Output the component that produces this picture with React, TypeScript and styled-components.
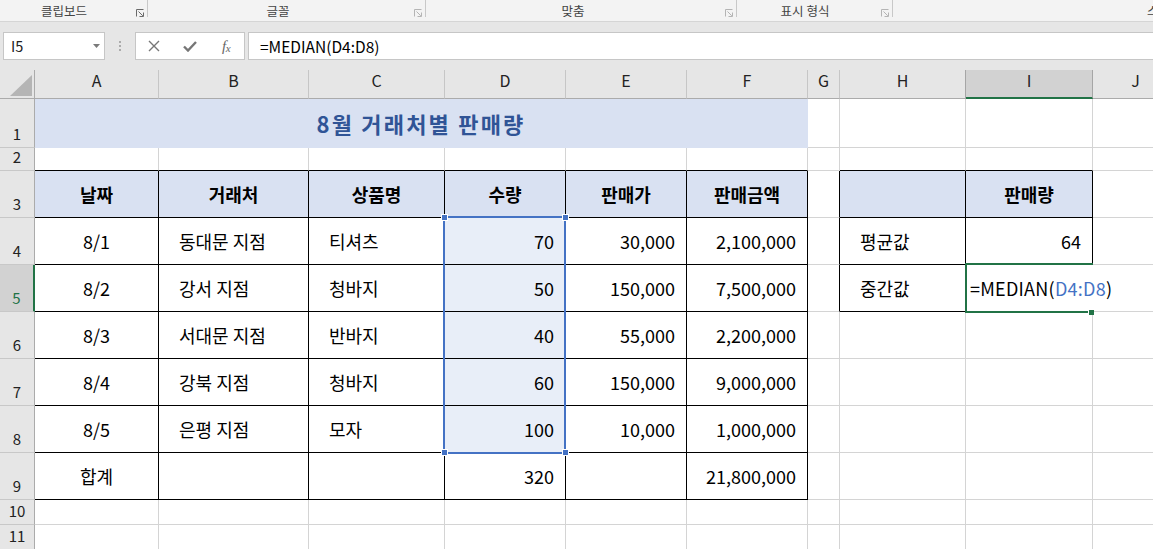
import React from "react";
import styled, { createGlobalStyle, css } from "styled-components";

const FONT = `"Noto Sans CJK KR", "Noto Sans", sans-serif`;
const GREEN = "#217346";
const BLUE = "#4472c4";
const HEAD_FILL = "#d9e1f2";
const SEL_FILL = "#e8eef8";
const GRID = "#d4d4d4";

const GlobalStyle = createGlobalStyle`
  html, body { margin: 0; padding: 0; background: #fff; }
  body { font-family: ${FONT}; overflow: hidden; }
`;

const Window = styled.div`
  width: 1153px;
  height: 549px;
  overflow: hidden;
  display: flex;
  flex-direction: column;
  background: #fff;
  font-family: ${FONT};
`;

/* ---------- Ribbon ---------- */
const Ribbon = styled.div`
  flex: none;
  display: flex;
  align-items: flex-start;
  height: 21px;
  background: #f3f3f3;
  border-bottom: 1px solid #d5d5d5;
  overflow: hidden;
`;

const Group = styled.div<{ $w?: number }>`
  flex: ${(p) => (p.$w ? "none" : "1")};
  width: ${(p) => (p.$w ? `${p.$w}px` : "auto")};
  height: 21px;
  display: flex;
  align-items: flex-start;
  min-width: 0;
`;

const GroupLabel = styled.div<{ $pr?: number; $pl?: number; $left?: boolean }>`
  flex: 1;
  text-align: ${(p) => (p.$left ? "left" : "center")};
  padding-right: ${(p) => p.$pr ?? 0}px;
  padding-left: ${(p) => p.$pl ?? 0}px;
  font-size: 12.5px;
  line-height: 21px;
  color: #444;
  white-space: nowrap;
  overflow: hidden;
`;

const Launcher = styled.svg<{ $dim?: boolean }>`
  flex: none;
  width: 8px;
  height: 8px;
  margin: 9px 3px 0 0;
  color: ${(p) => (p.$dim ? "#b4b4b4" : "#6a6a6a")};
`;

const Divider = styled.div`
  flex: none;
  width: 1px;
  height: 17px;
  background: #c8c8c8;
`;

const LauncherIcon = ({ dim }: { dim?: boolean }) => (
  <Launcher $dim={dim} viewBox="0 0 8 8" fill="none" stroke="currentColor" strokeWidth="1">
    <path d="M0.5 7.5 V0.5 H7.5" />
    <path d="M2.5 2.5 L6.8 6.8" />
    <path d="M7.5 3.5 V7.5 H3.5" />
  </Launcher>
);

/* ---------- Formula bar ---------- */
const FormulaArea = styled.div`
  flex: none;
  display: flex;
  align-items: flex-start;
  height: 48px;
  box-sizing: border-box;
  padding: 10px 0 0 3px;
  background: #e6e6e6;
`;

const NameBox = styled.div`
  flex: none;
  width: 102px;
  height: 28px;
  box-sizing: border-box;
  background: #fff;
  border: 1px solid #c6c6c6;
  display: flex;
  align-items: center;
  justify-content: space-between;
  padding: 0 4px 1px 7px;
  font-size: 14.5px;
  color: #222;
`;

const Caret = styled.svg`
  width: 7px;
  height: 4px;
  fill: #7a7a7a;
`;

const DotsSlot = styled.div`
  flex: none;
  width: 30px;
  height: 28px;
  display: flex;
  flex-direction: column;
  align-items: center;
  justify-content: center;
  gap: 2px;
`;

const Dot = styled.span`
  width: 2px;
  height: 2px;
  background: #ababab;
`;

const FnBox = styled.div`
  flex: none;
  width: 110px;
  height: 28px;
  box-sizing: border-box;
  background: #fff;
  border: 1px solid #c6c6c6;
  display: flex;
`;

const FnButton = styled.div`
  flex: 1;
  display: flex;
  align-items: center;
  justify-content: center;
  color: #767676;
`;

const FxText = styled.span`
  font-family: "Liberation Serif", "DejaVu Serif", serif;
  font-style: italic;
  font-size: 15px;
  color: #666;
  letter-spacing: -0.5px;
  & > small {
    font-size: 11px;
    position: relative;
    top: 1px;
  }
`;

const FormulaInput = styled.div`
  flex: 1;
  height: 28px;
  margin-left: 3px;
  box-sizing: border-box;
  background: #fff;
  border: 1px solid #c6c6c6;
  border-right: none;
  display: flex;
  align-items: center;
  padding: 0 0 1px 11px;
  font-size: 15.5px;
  color: #000;
  white-space: nowrap;
`;

/* ---------- Sheet ---------- */
const COL_W = [35, 124, 150, 136, 121, 121, 121, 32, 126, 127, 86];
const ROW_H = [29, 49, 23, 47, 47, 47, 47, 47, 47, 47, 25, 25];

const Sheet = styled.div`
  position: relative;
  flex: none;
  width: max-content;
  display: grid;
  grid-template-columns: ${COL_W.map((w) => `${w}px`).join(" ")};
  grid-template-rows: ${ROW_H.map((h) => `${h}px`).join(" ")};
  background: #fff;
`;

const Corner = styled.div`
  box-sizing: border-box;
  background: #e6e6e6;
  border-right: 1px solid #ababab;
  border-bottom: 1px solid #ababab;
  display: flex;
  align-items: flex-end;
  justify-content: flex-end;
  padding: 0 2px 2px 0;
`;

const ColHead = styled.div<{ $sel?: boolean; $dark?: boolean }>`
  box-sizing: border-box;
  background: ${(p) => (p.$sel ? "#d2d2d2" : "#e6e6e6")};
  border-right: 1px solid ${(p) => (p.$dark ? "#a6a6a6" : "#c6c6c6")};
  border-bottom: ${(p) => (p.$sel ? `2px solid ${GREEN}` : "1px solid #ababab")};
  display: flex;
  align-items: center;
  justify-content: center;
  padding-bottom: ${(p) => (p.$sel ? 7 : 8)}px;
  font-size: 16px;
  line-height: 18px;
  color: #222;
`;

const RowHead = styled.div<{ $sel?: boolean }>`
  box-sizing: border-box;
  background: ${(p) => (p.$sel ? "#d2d2d2" : "#e6e6e6")};
  border-right: ${(p) => (p.$sel ? `2px solid ${GREEN}` : "1px solid #ababab")};
  border-bottom: 1px solid #c8c8c8;
  display: flex;
  align-items: flex-end;
  justify-content: center;
  padding-bottom: 4px;
  font-size: 15px;
  line-height: 18px;
  color: ${(p) => (p.$sel ? GREEN : "#222")};
`;

type Align = "left" | "center" | "right";

const Cell = styled.div<{
  $align: Align;
  $bold?: boolean;
  $fill?: string;
  $br: string;
  $bb: string;
  $span?: number;
  $title?: boolean;
}>`
  box-sizing: border-box;
  min-width: 0;
  display: flex;
  align-items: center;
  justify-content: ${(p) =>
    p.$align === "center" ? "center" : p.$align === "right" ? "flex-end" : "flex-start"};
  padding: 0 ${(p) => (p.$align === "right" ? 11 : 0)}px 1px
    ${(p) => (p.$align === "left" ? 20 : 0)}px;
  background: ${(p) => p.$fill || "#fff"};
  border-right: 1px solid ${(p) => p.$br};
  border-bottom: 1px solid ${(p) => p.$bb};
  grid-column: ${(p) => (p.$span ? `span ${p.$span}` : "auto")};
  font-size: ${(p) => (p.$title ? 22 : 18)}px;
  letter-spacing: ${(p) => (p.$title ? "2.2px" : "normal")};
  font-weight: ${(p) => (p.$bold ? 700 : 400)};
  color: ${(p) => (p.$title ? "#305496" : "#000")};
  line-height: 24px;
  white-space: nowrap;
`;

/* overlays */
const RangeBox = styled.div`
  position: absolute;
  left: 443px;
  top: 146px;
  width: 123px;
  height: 238px;
  box-sizing: border-box;
  border: 2px solid ${BLUE};
  pointer-events: none;
`;

const handlePos = {
  tl: css`left: -3px; top: -3px;`,
  tr: css`right: -4px; top: -3px;`,
  bl: css`left: -3px; bottom: -3px;`,
  br: css`right: -4px; bottom: -3px;`,
};

const Handle = styled.span<{ $pos: keyof typeof handlePos }>`
  position: absolute;
  width: 5px;
  height: 5px;
  background: ${BLUE};
  box-shadow: 0 0 0 1px #fff;
  ${(p) => handlePos[p.$pos]}
`;

const EditFrame = styled.div`
  position: absolute;
  left: 965px;
  top: 193px;
  width: 128px;
  height: 50px;
  box-sizing: border-box;
  border-top: 2px solid ${GREEN};
  border-left: 2px solid ${GREEN};
  border-bottom: 2px solid ${GREEN};
  display: flex;
  align-items: center;
  padding: 0 0 1px 3px;
  font-size: 18px;
  letter-spacing: 0.25px;
  line-height: 24px;
  color: #000;
  white-space: nowrap;
`;

const RefText = styled.span`
  color: ${BLUE};
`;

const FillHandle = styled.span`
  position: absolute;
  left: 122px;
  bottom: -4px;
  width: 5px;
  height: 5px;
  background: ${GREEN};
  box-shadow: -1px -1px 0 0 #fff;
`;

/* ---------- data ---------- */
const LETTERS = ["A", "B", "C", "D", "E", "F", "G", "H", "I", "J"];
const HEADERS = ["날짜", "거래처", "상품명", "수량", "판매가", "판매금액"];
const BODY = [
  ["8/1", "동대문 지점", "티셔츠", "70", "30,000", "2,100,000"],
  ["8/2", "강서 지점", "청바지", "50", "150,000", "7,500,000"],
  ["8/3", "서대문 지점", "반바지", "40", "55,000", "2,200,000"],
  ["8/4", "강북 지점", "청바지", "60", "150,000", "9,000,000"],
  ["8/5", "은평 지점", "모자", "100", "10,000", "1,000,000"],
  ["합계", "", "", "320", "", "21,800,000"],
];
const ALIGNS: Align[] = ["center", "left", "left", "right", "right", "right"];

const inTable = (r: number, c: number) =>
  (r >= 3 && r <= 9 && c >= 0 && c <= 5) || (r >= 3 && r <= 5 && c >= 7 && c <= 8);

interface Spec {
  text?: string;
  align: Align;
  bold?: boolean;
  fill?: string;
}

function specFor(r: number, c: number): Spec {
  if (r === 3 && c <= 5) return { text: HEADERS[c], align: "center", bold: true, fill: HEAD_FILL };
  if (r === 3 && c === 7) return { align: "center", fill: HEAD_FILL };
  if (r === 3 && c === 8) return { text: "판매량", align: "center", bold: true, fill: HEAD_FILL };
  if (r >= 4 && r <= 9 && c <= 5)
    return {
      text: BODY[r - 4][c],
      align: ALIGNS[c],
      fill: c === 3 && r <= 8 ? SEL_FILL : undefined,
    };
  if (r === 4 && c === 7) return { text: "평균값", align: "left" };
  if (r === 4 && c === 8) return { text: "64", align: "right" };
  if (r === 5 && c === 7) return { text: "중간값", align: "left" };
  return { align: "left" };
}

function renderRow(r: number) {
  const out: React.ReactNode[] = [
    <RowHead key={`h${r}`} $sel={r === 5}>
      {r}
    </RowHead>,
  ];
  for (let c = 0; c < LETTERS.length; c++) {
    if (r === 1 && c === 0) {
      out.push(
        <Cell
          key={`c${r}-${c}`}
          $align="center"
          $bold
          $title
          $span={6}
          $fill={HEAD_FILL}
          $br={HEAD_FILL}
          $bb={HEAD_FILL}
        >
          8월 거래처별 판매량
        </Cell>
      );
      c = 5;
      continue;
    }
    const s = specFor(r, c);
    let br = inTable(r, c) || inTable(r, c + 1) ? "#000" : GRID;
    const bb = inTable(r, c) || inTable(r + 1, c) ? "#000" : GRID;
    if (r === 5 && c === 8) br = "#fff";
    out.push(
      <Cell
        key={`c${r}-${c}`}
        $align={s.align}
        $bold={s.bold}
        $fill={s.fill}
        $br={br}
        $bb={bb}
      >
        {s.text}
      </Cell>
    );
  }
  return out;
}

export default function App() {
  return (
    <Window>
      <GlobalStyle />
      <Ribbon>
        <Group $w={147}>
          <GroupLabel $pr={8}>클립보드</GroupLabel>
          <LauncherIcon />
        </Group>
        <Divider />
        <Group $w={277}>
          <GroupLabel $pr={6}>글꼴</GroupLabel>
          <LauncherIcon dim />
        </Group>
        <Divider />
        <Group $w={310}>
          <GroupLabel $pr={5}>맞춤</GroupLabel>
          <LauncherIcon dim />
        </Group>
        <Divider />
        <Group $w={155}>
          <GroupLabel $pr={8}>표시 형식</GroupLabel>
          <LauncherIcon dim />
        </Group>
        <Divider />
        <Group>
          <GroupLabel $left $pl={254}>스타일</GroupLabel>
        </Group>
      </Ribbon>

      <FormulaArea>
        <NameBox>
          I5
          <Caret viewBox="0 0 7 4">
            <path d="M0 0 H7 L3.5 4 Z" />
          </Caret>
        </NameBox>
        <DotsSlot>
          <Dot />
          <Dot />
          <Dot />
        </DotsSlot>
        <FnBox>
          <FnButton>
            <svg width="12" height="12" viewBox="0 0 12 12" fill="none" stroke="currentColor" strokeWidth="1.4">
              <path d="M1 1 L11 11 M11 1 L1 11" />
            </svg>
          </FnButton>
          <FnButton>
            <svg width="14" height="11" viewBox="0 0 14 11" fill="none" stroke="currentColor" strokeWidth="2.4">
              <path d="M1 5.5 L5 9.5 L13 1" />
            </svg>
          </FnButton>
          <FnButton>
            <FxText>
              f<small>x</small>
            </FxText>
          </FnButton>
        </FnBox>
        <FormulaInput>=MEDIAN(D4:D8)</FormulaInput>
      </FormulaArea>

      <Sheet>
        <Corner>
          <svg width="22" height="21" viewBox="0 0 22 21">
            <polygon points="22,0 22,21 0,21" fill="#b5b5b5" />
          </svg>
        </Corner>
        {LETTERS.map((l, i) => (
          <ColHead key={l} $sel={i === 8} $dark={i === 7 || i === 8}>
            {l}
          </ColHead>
        ))}
        {Array.from({ length: 11 }, (_, i) => renderRow(i + 1))}

        <RangeBox>
          <Handle $pos="tl" />
          <Handle $pos="tr" />
          <Handle $pos="bl" />
          <Handle $pos="br" />
        </RangeBox>
        <EditFrame>
          =MEDIAN(<RefText>D4:D8</RefText>)
          <FillHandle />
        </EditFrame>
      </Sheet>
    </Window>
  );
}
